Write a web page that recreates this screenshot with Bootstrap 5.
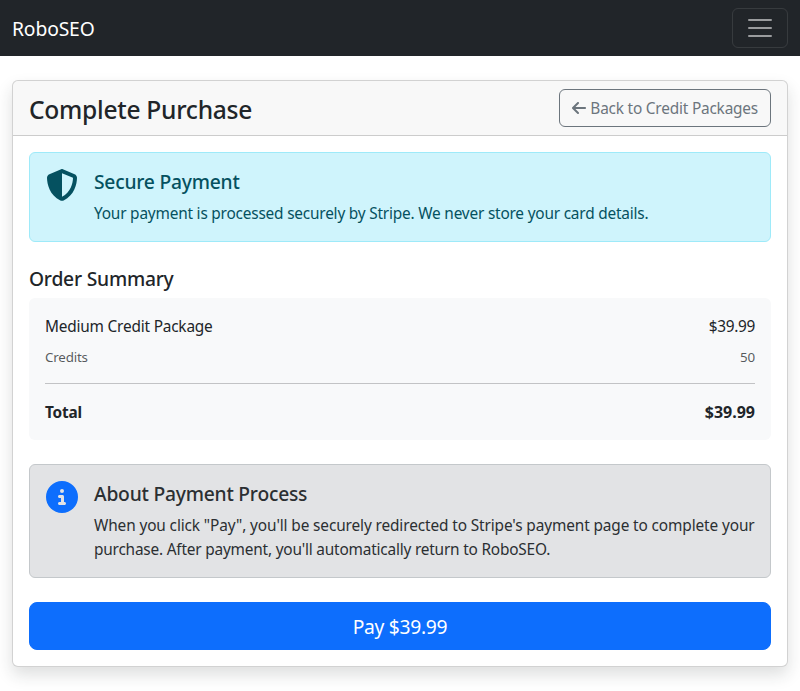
<!DOCTYPE html>
<html lang="en">
<head>
<meta charset="utf-8">
<meta name="viewport" content="width=device-width, initial-scale=1">
<title>Complete Purchase - RoboSEO</title>
<link href="https://cdn.jsdelivr.net/npm/bootstrap@5.3.0/dist/css/bootstrap.min.css" rel="stylesheet">
<style>
body { font-family: "Noto Sans", "Open Sans", sans-serif; font-size: 15.4px; line-height: 24px; letter-spacing: -.2px; min-height: 100vh; overflow: hidden; }
.navbar-brand { font-size: 19.3px; line-height: 30px; padding: 6px 0 4px; letter-spacing: -.13px; }
.page-title { font-size: 24.6px; line-height: 31px; padding-top: 2px; letter-spacing: -.28px; }
.section-title { font-size: 19.25px; line-height: 24px; padding-top: 1px; margin-bottom: 7px; letter-spacing: -.22px; }
.btn-back { font-size: 15.4px; line-height: 24px; letter-spacing: -.2px; }
.btn-pay { font-size: 19.25px; line-height: 30px; padding-top: 9px; padding-bottom: 7px; letter-spacing: -.3px; }
.credits-row { font-size: 13.4px; line-height: 21px; }
.price { letter-spacing: -.3px; }
.price-total { letter-spacing: 0; font-size: 16px; margin-top: -1px; }
.text-drop { padding-top: 1px; margin-bottom: -1px; }
.process-text { margin-right: -6px; }
.process-text::first-line { letter-spacing: -.12px; }
.glyph { fill: currentColor; display: block; }
.alert-info { --bs-alert-color: #055160; --bs-alert-bg: #cff4fc; --bs-alert-border-color: #9eeaf9; }
.alert-secondary { --bs-alert-color: #2b2f32; --bs-alert-bg: #e2e3e5; --bs-alert-border-color: #c4c8cb; }
</style>
</head>
<body>
<nav class="navbar navbar-expand-lg navbar-dark bg-dark">
  <div class="container-fluid">
    <a class="navbar-brand" href="#">RoboSEO</a>
    <button class="navbar-toggler" type="button" aria-label="Toggle navigation"><span class="navbar-toggler-icon"></span></button>
  </div>
</nav>
<main class="container-fluid mt-4">
  <div class="card shadow">
    <div class="card-header d-flex justify-content-between align-items-center">
      <h1 class="page-title mb-0">Complete Purchase</h1>
      <a href="#" class="btn btn-outline-secondary btn-back d-flex align-items-center">
        <svg class="glyph me-1" width="14" height="16" viewBox="0 0 448 512"><path d="M9.400 233.400c-12.500 12.500-12.500 32.800 0 45.300l160 160c12.500 12.500 32.800 12.500 45.300 0s12.500-32.800 0-45.300L109.200 288 416 288c17.700 0 32-14.300 32-32s-14.300-32-32-32l-306.700 0L214.600 118.600c12.500-12.500 12.500-32.800 0-45.300s-32.800-12.500-45.300 0l-160 160z"/></svg>
        <span class="text-drop">Back to Credit Packages</span></a>
    </div>
    <div class="card-body">
      <div class="alert alert-info d-flex mb-4">
        <svg class="glyph flex-shrink-0 me-3" width="32" height="32" viewBox="0 0 512 512"><path d="M256 0c4.600 0 9.200 1 13.400 2.900L457.700 82.800c22 9.300 38.400 31 38.300 57.200c-.5 99.200-41.300 280.700-213.600 363.200c-16.700 8-36.100 8-52.800 0C57.300 420.700 16.500 239.200 16 140c-.1-26.200 16.300-47.900 38.300-57.200L242.700 2.900C246.800 1 251.400 0 256 0zm0 66.800l0 378.100C394 378 431.100 230.100 432 141.400L256 66.800z"/></svg>
        <div><h5 class="section-title">Secure Payment</h5><p class="text-drop">Your payment is processed securely by Stripe. We never store your card details.</p></div>
      </div>
      <h5 class="section-title">Order Summary</h5>
      <div class="bg-light rounded p-3 mb-4">
        <div class="d-flex justify-content-between mb-2"><span class="text-drop">Medium Credit Package</span><span class="price text-drop">$39.99</span></div>
        <div class="d-flex justify-content-between text-muted credits-row"><span class="text-drop">Credits</span><span class="text-drop">50</span></div>
        <hr>
        <div class="d-flex justify-content-between fw-bold"><span class="text-drop">Total</span><span class="price-total text-drop">$39.99</span></div>
      </div>
      <div class="alert alert-secondary d-flex mb-4">
        <svg class="glyph text-primary flex-shrink-0 me-3" width="32" height="32" viewBox="0 0 512 512"><path d="M256 512A256 256 0 1 0 256 0a256 256 0 1 0 0 512zM216 336l24 0 0-64-24 0c-13.300 0-24-10.700-24-24s10.700-24 24-24l48 0c13.300 0 24 10.700 24 24l0 88 8 0c13.300 0 24 10.700 24 24s-10.700 24-24 24l-80 0c-13.300 0-24-10.700-24-24s10.700-24 24-24zm40-208a32 32 0 1 1 0 64 32 32 0 1 1 0-64z"/></svg>
        <div><h5 class="section-title">About Payment Process</h5><p class="text-drop process-text">When you click "Pay", you'll be securely redirected to Stripe's payment page to complete your purchase. After payment, you'll automatically return to RoboSEO.</p></div>
      </div>
      <button class="btn btn-primary btn-lg btn-pay w-100">Pay $39.99</button>
    </div>
  </div>
</main>
<script src="https://cdn.jsdelivr.net/npm/bootstrap@5.3.0/dist/js/bootstrap.bundle.min.js"></script>
</body>
</html>
